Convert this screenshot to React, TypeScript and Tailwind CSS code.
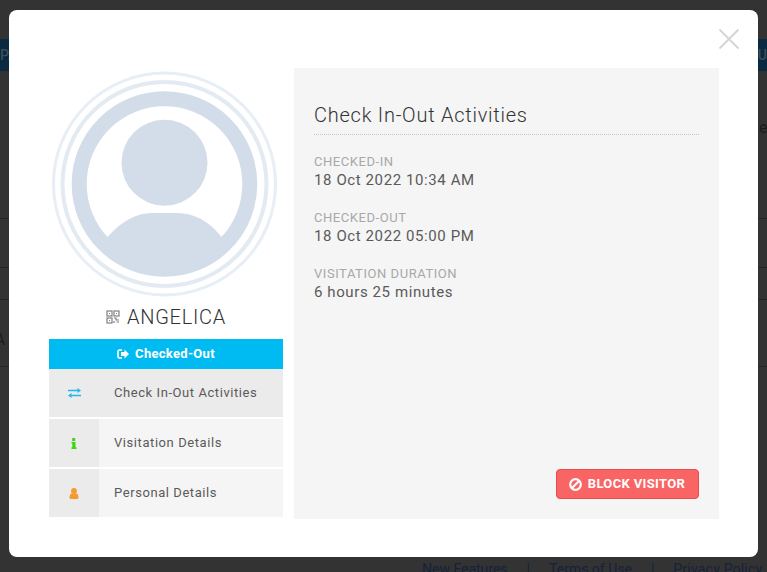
import type { ReactNode } from "react";

const font = { fontFamily: "Roboto, sans-serif" };

function Avatar() {
  return (
    <svg width="226" height="226" viewBox="-0.5 0 226 226" className="block">
      <circle cx="113" cy="113" r="111" fill="none" stroke="#e8eef5" strokeWidth="3" />
      <circle cx="113" cy="113" r="102" fill="none" stroke="#e3eaf2" strokeWidth="4" />
      <circle cx="113" cy="113" r="85.3" fill="none" stroke="#d2dde9" strokeWidth="15" />
      <circle cx="113" cy="91.7" r="43" fill="#d2dde9" />
      <path d="M53 166L56 166C70 150 85 142 100 142L126 142C142 142 158 150 170 166L173 166A80 80 0 0 1 53 166Z" fill="#d2dde9" />
    </svg>
  );
}

function QrIcon() {
  return (
    <svg width="14" height="14" viewBox="0 0 14 14" fill="none" stroke="#808080" strokeWidth="1.2">
      <rect x="1" y="1" width="5" height="5" />
      <rect x="8" y="1" width="5" height="5" />
      <rect x="1" y="8" width="5" height="5" />
      <rect x="3" y="3" width="1" height="1" fill="#808080" stroke="none" />
      <rect x="10" y="3" width="1" height="1" fill="#808080" stroke="none" />
      <rect x="3" y="10" width="1" height="1" fill="#808080" stroke="none" />
      <path d="M8 8h2v2h3M8 11v2M10.500 12h2.500" />
    </svg>
  );
}

function BanIcon() {
  return (
    <svg width="13" height="13" viewBox="0 0 13 13" fill="none" stroke="#fff" strokeWidth="2.2">
      <circle cx="6.500" cy="6.500" r="5.300" />
      <path d="M3 10L10 3" />
    </svg>
  );
}

function SignOutIcon() {
  return (
    <svg width="12" height="10" viewBox="0 0 12 10" fill="#fff">
      <path d="M5 1H2.500Q1 1 1 2.500V7.500Q1 9 2.500 9H5" fill="none" stroke="#fff" strokeWidth="1.600" />
      <path d="M4 3H7.500V0.500L12 5L7.500 9.500V7H4Z" />
    </svg>
  );
}

function ExchangeIcon() {
  return (
    <svg width="13" height="10" viewBox="0 0 13 10" fill="#25b5ef">
      <path d="M0 1.800H9.500V0L13 2.500L9.500 5V3.200H0Z" />
      <path d="M13 6.800H3.500V5L0 7.500L3.500 10V8.200H13Z" />
    </svg>
  );
}

function InfoIcon() {
  return (
    <svg width="6" height="11" viewBox="0 0 6 11" fill="#3fd80c">
      <rect x="1.200" y="0" width="3" height="3" />
      <path d="M0.500 4H4.500V9.300H5.500V11H0.500V9.300H1.300V5.500H0.500Z" />
    </svg>
  );
}

function UserIcon() {
  return (
    <svg width="10" height="11" viewBox="0 0 10 11" fill="#f59a2f">
      <ellipse cx="5" cy="3" rx="2.900" ry="3" />
      <path d="M0.500 9.500C0.500 7 1.500 5.500 2.800 5.300Q5 6.800 7.200 5.300C8.500 5.500 9.500 7 9.500 9.500Q9.500 11 8 11H2Q0.500 11 0.500 9.500Z" />
    </svg>
  );
}

function MenuRow({ icon, label, active }: { icon: ReactNode; label: string; active?: boolean }) {
  return (
    <div className={`flex h-12 items-center ${active ? "bg-[#ebebeb]" : "bg-[#f5f5f5]"}`}>
      <div className="flex h-full w-[50px] items-center justify-center bg-[#ebebeb]">{icon}</div>
      <div className="pl-[15px] text-[13px] tracking-[0.57px] text-[#5a5a5a]">{label}</div>
    </div>
  );
}

function Info({ label, value }: { label: string; value: string }) {
  return (
    <div className="mb-[18px]">
      <div className="pt-px text-[13px] leading-[18px] tracking-[0.55px] text-[#a8a8a8]">{label}</div>
      <div className="text-[15px] leading-[19px] tracking-[0.6px] text-[#5a5a5a]">{value}</div>
    </div>
  );
}

export default function App() {
  return (
    <div className="relative h-[572px] w-[767px] overflow-hidden bg-[#333]" style={font}>
      <div className="absolute left-0 top-[39px] flex h-8 w-full items-center justify-between overflow-hidden bg-[#092a40] text-[14px] font-medium text-[#3f4d58]">
        <span>PA</span>
        <span>U</span>
      </div>
      <div className="absolute left-0 top-[218px] h-px w-full bg-[#252525]" />
      <div className="absolute left-0 top-[267px] h-px w-full bg-[#252525]" />
      <div className="absolute left-0 top-[299px] h-px w-full bg-[#252525]" />
      <div className="absolute left-0 top-[366px] h-px w-full bg-[#252525]" />
      <div className="absolute left-0 top-[328px] -translate-x-1/2 text-[16px] text-[#1c1c1c]">A</div>
      <div className="absolute left-[759px] top-[116px] text-[16px] text-[#1c1c1c]">e</div>
      <div className="absolute left-[422px] top-[559px] flex w-[350px] gap-[19px] whitespace-nowrap text-[14px] leading-[20px] text-[#14223a]">
        <span>New Features</span><span>|</span><span>Terms of Use</span><span>|</span><span className="tracking-[0.2px]">Privacy Policy</span>
      </div>

      <div className="relative ml-[9px] mt-[10px] h-[547px] w-[749px] rounded-lg bg-white pl-10 pr-[39px] pt-[58px]">
        <svg className="absolute right-[18px] top-[18px]" width="22" height="22" viewBox="0 0 22 22" stroke="#d4d4d4" strokeWidth="1.8">
          <path d="M1.500 1.500L20.500 20.500M20.500 1.500L1.500 20.500" />
        </svg>
        <div className="flex gap-[11px]">
          <div className="w-[234px]">
            <div className="ml-[2px] mt-[3px]"><Avatar /></div>
            <div className="mt-[7px] flex h-[26px] items-center justify-center gap-[7px]">
              <QrIcon />
              <span className="text-[20px] font-light tracking-[0.75px] text-[#333]">ANGELICA</span>
            </div>
            <div className="mt-[9px] flex h-[30px] items-center justify-center gap-[6px] bg-[#00bbf2] text-[13px] font-bold tracking-[0.3px] text-white">
              <SignOutIcon /> Checked-Out
            </div>
            <div className="flex flex-col gap-0.5">
              <MenuRow active label="Check In-Out Activities" icon={<ExchangeIcon />} />
              <MenuRow label="Visitation Details" icon={<InfoIcon />} />
              <MenuRow label="Personal Details" icon={<UserIcon />} />
            </div>
          </div>
          <div className="relative h-[451px] w-[425px] bg-[#f5f5f5] px-5 pt-[34px]">
            <div className="border-b border-dotted border-[#c4c4c4] pb-[5px] text-[20px] font-light leading-[27px] tracking-[0.75px] text-[#333]">
              Check In-Out Activities
            </div>
            <div className="mt-[17px]">
              <Info label="CHECKED-IN" value="18 Oct 2022 10:34 AM" />
              <Info label="CHECKED-OUT" value="18 Oct 2022 05:00 PM" />
              <Info label="VISITATION DURATION" value="6 hours 25 minutes" />
            </div>
            <button className="absolute bottom-[20px] right-[20px] flex h-[30px] w-[143px] items-center justify-center gap-[6px] rounded-[4px] border border-[#e94b4b] bg-[#f96464] pr-[1px] text-[13px] font-bold tracking-[0.35px] text-white">
              <BanIcon /> BLOCK VISITOR
            </button>
          </div>
        </div>
      </div>
    </div>
  );
}
